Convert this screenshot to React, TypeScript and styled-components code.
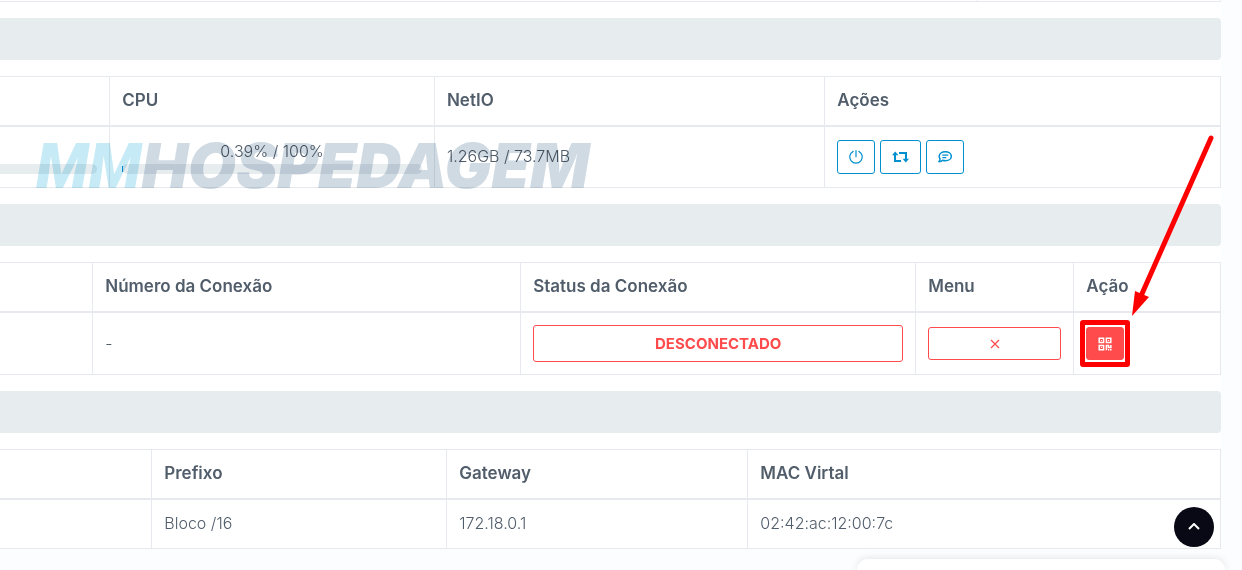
import React from "react";
import styled, { createGlobalStyle } from "styled-components";

const line = "#e6e9ed";
const blue = "#0090d0";
const red = "#ff4b4b";

const GlobalStyle = createGlobalStyle`
  * { box-sizing: border-box; }
  body {
    margin: 0;
    background: #fcfdff;
    color: #515d6a;
    font: 300 16px/24px Inter, "Liberation Sans", sans-serif;
    overflow: hidden;
  }
`;

const Page = styled.main`
  position: relative;
  margin-right: 21px;
  background: #fff;
`;

const TableEnd = styled.div`
  height: 2px;
  border: solid ${line};
  border-width: 0 1px 1px 0;
`;

const TableEndCell = styled.div`
  width: 80.2%;
  height: 1px;
  border-right: 1px solid ${line};
`;

const SectionBar = styled.div`
  height: 42px;
  margin: 16px 0;
  border-radius: 0 4px 4px 0;
  background: #e7ecef;
`;

const Table = styled.table`
  width: 100%;
  table-layout: fixed;
  border-collapse: separate;
  border-spacing: 0;
  border: solid ${line};
  border-width: 1px 1px 1px 0;
`;

const Col = styled.col<{ $width?: string }>`
  width: ${(p) => p.$width ?? "auto"};
`;

const Th = styled.th`
  padding: 11px 12px 13px;
  border-left: 1px solid ${line};
  border-bottom: 2px solid ${line};
  text-align: left;
  font-size: 17px;
  font-weight: 600;
  white-space: nowrap;
  &:first-child { border-left: 0; }
`;

const Td = styled.td<{ $text?: boolean }>`
  padding: ${(p) => (p.$text ? "11px 12px 13px" : "12px")};
  border-left: 1px solid ${line};
  vertical-align: middle;
  &:first-child { border-left: 0; }
`;

const Usage = styled.div`
  display: flex;
  flex-direction: column;
  height: 36px;
  text-align: center;
`;

const Label = styled.span`
  height: 25px;
`;

const Track = styled.div<{ $open?: boolean }>`
  display: flex;
  align-items: center;
  height: 10px;
  margin-left: ${(p) => (p.$open ? "-12px" : "0")};
  border-radius: ${(p) => (p.$open ? "0 5px 5px 0" : "5px")};
  background: #e7ecef;
`;

const Fill = styled.div`
  height: 6px;
  min-width: 1px;
  background: ${blue};
`;

const Actions = styled.div`
  display: flex;
  gap: 5px;
`;

const Button = styled.button<{ $tone: string; $solid?: boolean; $block?: boolean; $height: number }>`
  display: flex;
  align-items: center;
  justify-content: center;
  width: ${(p) => (p.$block ? "100%" : "auto")};
  height: ${(p) => p.$height}px;
  padding: 0 11px;
  border: 1px solid ${(p) => p.$tone};
  border-radius: 3px;
  background: ${(p) => (p.$solid ? p.$tone : "transparent")};
  color: ${(p) => (p.$solid ? "#fff" : p.$tone)};
  font: 700 15px/20px Inter, "Liberation Sans", sans-serif;
`;

const Highlight = styled.div`
  position: relative;
  width: 38px;
  &::after {
    content: "";
    position: absolute;
    inset: -7px -6px;
    border: 5px solid #f00;
    border-radius: 3px;
    pointer-events: none;
  }
`;

const Watermark = styled.div`
  position: absolute;
  top: 130px;
  left: 36px;
  color: #d0dae3;
  font: italic 900 62px/72px Inter, sans-serif;
  white-space: nowrap;
  mix-blend-mode: multiply;
  pointer-events: none;
  span {
    color: #c6eaf6;
    font-family: Roboto, sans-serif;
  }
`;

const Arrow = styled.svg`
  position: absolute;
  top: 130px;
  right: 0;
  pointer-events: none;
`;

const ToTop = styled.button`
  position: fixed;
  right: 28px;
  bottom: 23px;
  display: flex;
  align-items: center;
  justify-content: center;
  width: 40px;
  height: 40px;
  padding: 0;
  border: 0;
  border-radius: 50%;
  background: #080914;
`;

const Popup = styled.aside`
  position: fixed;
  right: 17px;
  bottom: 0;
  width: 368px;
  height: 11px;
  border-radius: 16px 16px 0 0;
  background: #fff;
  box-shadow: 0 0 8px rgba(0, 0, 0, 0.12);
`;

const PowerIcon = () => (
  <svg width="14" height="14" viewBox="0 0 14 14" fill="none" stroke="currentColor" strokeWidth="1.2" strokeLinecap="round">
    <path d="M7 .6v6.2M4.2 1.4a6.2 6.2 0 1 0 5.6 0" />
  </svg>
);

const LoopIcon = () => (
  <svg width="17" height="12" viewBox="0 0 17 12" fill="none" stroke="currentColor" strokeWidth="2">
    <path d="M3 3v7h6M7 2h7v7" />
    <path d="M0 4.3 3.2.5l3.2 3.8zM10.6 7.8H17l-3.2 3.8z" fill="currentColor" stroke="none" />
  </svg>
);

const ChatIcon = () => (
  <svg width="14" height="14" viewBox="0 0 14 14" fill="none" stroke="currentColor" strokeWidth="1.5" strokeLinejoin="round">
    <path d="M7.3 1.7c3.5 0 6 1.9 6 4.5s-2.5 4.6-6 4.6c-1 0-1.9-.2-2.7-.5-.9.9-2.1 1.4-3.7 1.5.8-.9 1.2-1.8 1.2-2.7-.6-.8-.9-1.7-.9-2.8 0-2.7 2.6-4.6 6.1-4.6Z" />
    <path d="M4.3 5.2h6M4.3 7.6h4" strokeWidth="1.2" />
  </svg>
);

const CloseIcon = () => (
  <svg width="10" height="10" viewBox="0 0 10 10" stroke="currentColor" strokeWidth="1.3">
    <path d="m1 1 8 8M9 1 1 9" />
  </svg>
);

const QrIcon = () => (
  <svg width="14" height="14" viewBox="0 0 14 14" fill="none" stroke="currentColor" strokeWidth="1.5">
    <path d="M1.2 1.2h4.4v4.4H1.2zM8.4 1.2h4.4v4.4H8.4zM1.2 8.4h4.4v4.4H1.2zM8.4 13.2V8.4h2.1v2.2h2.4V7.9" />
    <path d="M2.9 2.9h1v1h-1zM10.1 2.9h1v1h-1zM2.9 10.1h1v1h-1zM10 12h1.2v1.5H10zM12 12h1.5v1.5H12z" fill="currentColor" stroke="none" />
  </svg>
);

export default function App() {
  return (
    <>
      <GlobalStyle />
      <Page>
        <TableEnd><TableEndCell /></TableEnd>
        <SectionBar />
        <Table>
          <colgroup>
            <Col $width="8.95%" />
            <Col $width="26.62%" />
            <Col $width="32%" />
            <Col />
          </colgroup>
          <thead>
            <tr><Th /><Th>CPU</Th><Th>NetIO</Th><Th>Ações</Th></tr>
          </thead>
          <tbody>
            <tr>
              <Td><Usage><Label /><Track $open /></Usage></Td>
              <Td>
                <Usage>
                  <Label>0.39% / 100%</Label>
                  <Track><Fill style={{ width: "0.39%" }} /></Track>
                </Usage>
              </Td>
              <Td $text>1.26GB / 73.7MB</Td>
              <Td>
                <Actions>
                  <Button $tone={blue} $height={34} aria-label="Desligar"><PowerIcon /></Button>
                  <Button $tone={blue} $height={34} aria-label="Reiniciar"><LoopIcon /></Button>
                  <Button $tone={blue} $height={34} aria-label="Mensagens"><ChatIcon /></Button>
                </Actions>
              </Td>
            </tr>
          </tbody>
        </Table>
        <SectionBar />
        <Table>
          <colgroup>
            <Col $width="7.56%" />
            <Col $width="35.08%" />
            <Col $width="32.38%" />
            <Col $width="12.96%" />
            <Col />
          </colgroup>
          <thead>
            <tr><Th /><Th>Número da Conexão</Th><Th>Status da Conexão</Th><Th>Menu</Th><Th>Ação</Th></tr>
          </thead>
          <tbody>
            <tr>
              <Td />
              <Td $text>-</Td>
              <Td><Button $tone={red} $height={37} $block>DESCONECTADO</Button></Td>
              <Td><Button $tone={red} $height={33} $block aria-label="Fechar"><CloseIcon /></Button></Td>
              <Td>
                <Highlight>
                  <Button $tone={red} $height={33} $solid aria-label="QR Code"><QrIcon /></Button>
                </Highlight>
              </Td>
            </tr>
          </tbody>
        </Table>
        <SectionBar />
        <Table>
          <colgroup>
            <Col $width="12.4%" />
            <Col $width="24.18%" />
            <Col $width="24.68%" />
            <Col />
          </colgroup>
          <thead>
            <tr><Th /><Th>Prefixo</Th><Th>Gateway</Th><Th>MAC Virtal</Th></tr>
          </thead>
          <tbody>
            <tr><Td /><Td $text>Bloco /16</Td><Td $text>172.18.0.1</Td><Td $text>02:42:ac:12:00:7c</Td></tr>
          </tbody>
        </Table>
        <Watermark aria-hidden="true"><span>MM</span>HOSPEDAGEM</Watermark>
        <Arrow width="96" height="190" viewBox="0 0 96 190">
          <path d="M86 8 16 166" stroke="#f00" strokeWidth="5" strokeLinecap="round" />
          <path d="m7 186 3-25 14 6z" fill="#f00" />
        </Arrow>
      </Page>
      <ToTop aria-label="Voltar ao topo">
        <svg width="12" height="8" viewBox="0 0 12 8" fill="none" stroke="#fff" strokeWidth="2">
          <path d="m1 6 5-5 5 5" />
        </svg>
      </ToTop>
      <Popup />
    </>
  );
}
